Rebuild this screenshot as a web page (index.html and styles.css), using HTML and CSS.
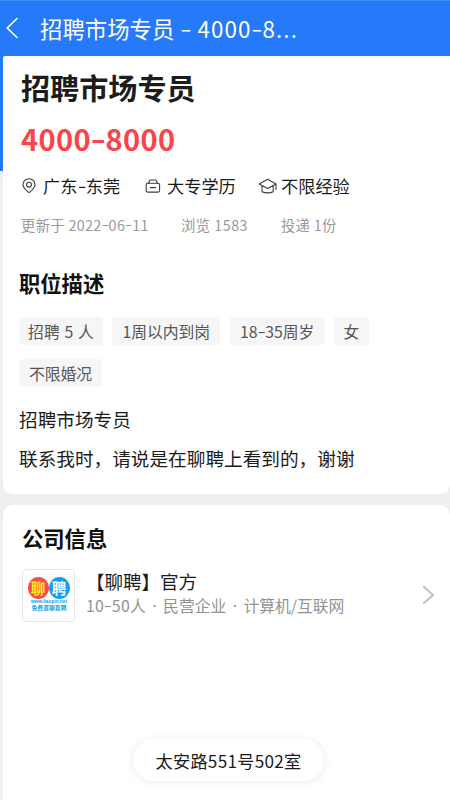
FILE: index.html
```html
<!DOCTYPE html>
<html lang="zh-CN">
<head>
<meta charset="utf-8">
<title>招聘市场专员</title>
<link rel="stylesheet" href="styles.css">
</head>
<body>
<header class="bar">
  <svg class="back" width="14" height="22" viewBox="0 0 14 22"><path d="M12 1.5 2.2 11 12 20.5"/></svg>
  <div class="bar-title">招聘市场专员<span class="bar-pay"> <span class="dash">-</span> 4000<span class="dash">-</span>8...</span></div>
</header>
<main class="cards">
  <section class="card job">
    <h1>招聘市场专员</h1>
    <div class="salary">4000<span class="dash">-</span>8000</div>
    <div class="facts">
      <div class="fact place"><svg width="14" height="16" viewBox="0 0 14 16"><path d="M7 14.700C4.200 12.300 1 9.900 1 6.700a6 6 0 0 1 12 0C13 9.900 9.800 12.300 7 14.700Z"/><circle cx="7" cy="6.700" r="2.400"/></svg><span>广东<span class="dash">-</span>东莞</span></div>
      <div class="fact degree"><svg width="16" height="14" viewBox="0 0 16 14"><rect x="1.200" y="4.200" width="13.400" height="8.900" rx="1.500"/><path d="M3.500 4.200 4.300 2Q4.600 1 5.600 1h4.600q1 0 1.300 1l.8 2.200M5.500 8.600h5"/></svg><span>大专学历</span></div>
      <div class="fact exp"><svg width="20" height="16" viewBox="0 0 20 16"><path d="M1.200 6 9.600 1.300 18 6 9.600 10.400ZM4 7.700v6q5.600 2.400 11.200 0V7.700M18 6v5.500"/></svg><span>不限经验</span></div>
    </div>
    <div class="meta"><span class="updated">更新于 2022<span class="dash">-</span>06<span class="dash">-</span>11</span><span class="views">浏览 1583</span><span class="sent">投递 1份</span></div>
    <h2>职位描述</h2>
    <div class="tags">
      <span class="tag t1">招聘 5 人</span><span class="tag t2">1周以内到岗</span><span class="tag t3">18<span class="dash">-</span>35周岁</span><span class="tag t4">女</span><span class="tag t5">不限婚况</span>
    </div>
    <p>招聘市场专员</p>
    <p>联系我时，请说是在聊聘上看到的，谢谢</p>
  </section>
  <section class="card company">
    <h2>公司信息</h2>
    <div class="firm">
      <div class="logo">
        <div class="discs"><span class="disc red">聊</span><span class="disc blue">聘</span></div>
        <svg class="caption" width="42" height="15" viewBox="0 0 42 15"><text class="url" x="3" y="3.800" textLength="36" lengthAdjust="spacingAndGlyphs">www.liaopin.net</text><text class="slogan" x="3.500" y="11" textLength="35" lengthAdjust="spacingAndGlyphs">免费直聊直聘</text></svg>
      </div>
      <div class="firm-text"><div class="name">【聊聘】官方</div><div class="kind"><span class="size">10<span class="dash">-</span>50人</span><span class="dot"> · </span>民营企业<span class="dot"> · </span>计算机/互联网</div></div>
      <svg class="next" width="14" height="20" viewBox="0 0 14 20"><path d="M2 2 11 10 2 18"/></svg>
    </div>
  </section>
</main>
<div class="toast">太安路551号502室</div>
</body>
</html>
```
FILE: styles.css
```css
* { box-sizing: border-box; }
body {
  margin: 0;
  height: 800px;
  overflow: hidden;
  background: #efefef;
  color: #1c1c1c;
  font-family: "Noto Sans CJK SC", sans-serif;
}
svg { display: block; flex: none; fill: none; stroke-linecap: round; stroke-linejoin: round; }
.dash { display: inline-block; transform: translateY(-.05em) scaleX(1.45); margin: 0 .07em; letter-spacing: 0; }
.bar {
  height: 56px;
  display: flex;
  align-items: center;
  padding: 0 0 2px 5px;
  background: #2679f8;
  border-top: 1px solid #408df8;
  color: #fff;
}
.back { stroke: #fff; stroke-width: 1.6; }
.bar-title { margin-left: 21px; font-size: 22.4px; line-height: 32px; white-space: pre; }
.bar-pay { letter-spacing: 1.1px; }
.cards { padding-left: 3px; background: linear-gradient(#2679f8 115px, #efefef 115px); }
.card { background: #fff; border-radius: 10px; }
.job { height: 438px; padding: 11px 16px 0; border-top-left-radius: 2px; border-top-right-radius: 0; }
h1 { margin: 0 0 0 2px; font-size: 29.1px; line-height: 40px; font-weight: 700; }
.salary { margin: 12px 0 0 2px; font-size: 29px; line-height: 38px; font-weight: 700; color: #fc4349; letter-spacing: .35px; }
.facts { display: flex; height: 26px; margin-top: 16px; padding-left: 3px; font-size: 17.2px; line-height: 26px; }
.fact { display: flex; align-items: center; }
.fact svg { stroke: #3c3c3c; stroke-width: 1.1; }
.place { width: 123px; gap: 7px; }
.degree { width: 113px; gap: 6px; }
.exp { gap: 3px; }
.meta { display: flex; margin: 16px 0 0 2px; font-size: 14.3px; line-height: 20px; color: #999; }
.updated { width: 160px; letter-spacing: .35px; }
.views { width: 100px; letter-spacing: .5px; }
.sent { letter-spacing: .3px; }
h2 { margin: 33px 0 0; font-size: 21.3px; line-height: 30px; font-weight: 700; color: #111; }
.tags { display: flex; flex-wrap: wrap; gap: 14px 9.300px; margin-top: 19px; }
.tag { height: 28px; border-radius: 3px; background: #f6f6f6; color: #555; text-align: center; font-size: 15.8px; line-height: 29px; }
.t1 { width: 84px; word-spacing: 1.3px; }
.t2 { width: 108px; }
.t3 { width: 95px; }
.t4 { width: 35px; }
.t5 { width: 83px; }
p { margin: 0; font-size: 18.65px; line-height: 39px; }
.tags + p { margin-top: 12px; }
.company { height: 295px; margin-top: 11px; padding: 18px 16px 0 19px; border-radius: 10px 10px 0 0; }
.company h2 { margin: 0; }
.firm { display: flex; align-items: center; margin-top: 16px; height: 53px; }
.logo { width: 53px; height: 53px; padding-top: 7px; border: 1px solid #e7e7e7; border-radius: 4px; display: flex; flex-direction: column; align-items: center; }
.discs { display: flex; }
.disc { width: 21px; height: 22px; border-radius: 50%; text-align: center; font-size: 14.5px; line-height: 22px; font-weight: 700; }
.red { background: #f84b4d; color: #ffef16; }
.blue { background: #14a0ee; color: #fff; }
.caption { fill: #159fe4; overflow: visible; }
.url { font: 700 4.800px "Liberation Sans", sans-serif; }
.slogan { font: 700 6px "Noto Sans CJK SC", sans-serif; }
.firm-text { margin-left: 11px; flex: 1; white-space: nowrap; padding-bottom: 6px; }
.name { font-size: 18.5px; line-height: 26px; }
.kind { font-size: 15.8px; line-height: 24px; color: #929292; white-space: pre; }
.size { letter-spacing: .3px; }
.dot { font-family: "Noto Sans", sans-serif; word-spacing: 2.3px; }
.next { stroke: #c4c4c4; stroke-width: 2.2; margin: 0 -2px 1px 0; }
.toast {
  position: absolute;
  left: 133px;
  top: 739px;
  width: 191px;
  height: 42px;
  border-radius: 21px;
  background: #fff;
  box-shadow: 0 1px 10px rgba(0, 0, 0, .09);
  text-align: center;
  font-size: 17.2px;
  letter-spacing: .25px;
  line-height: 43px;
}
```
